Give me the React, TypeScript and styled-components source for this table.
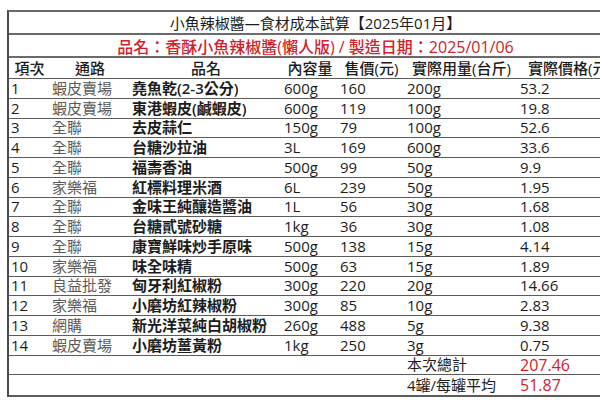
import styled, { createGlobalStyle } from "styled-components";

const GlobalStyle = createGlobalStyle`
  body {
    margin: 0;
    background: #ffffff;
    overflow: hidden;
  }
`;

const COLS = "41px 80px 152px 56px 67px 113px 104px";

const Page = styled.div`
  padding: 10px 0 0 7px;
  width: 620px;
  font-family: "Open Sans", "Noto Sans CJK TC", sans-serif;
  color: #1c1c1c;
`;

const Sheet = styled.div`
  width: 613px;
  border-left: 2px solid #4a4a4a;
  border-top: 2px solid #6a6a6a;
`;

const TitleRow = styled.div<{ $red?: boolean }>`
  height: 21px;
  display: flex;
  align-items: center;
  justify-content: center;
  border-bottom: 2px solid #6a6a6a;
  font-size: ${(p) => (p.$red ? 16 : 15)}px;
  font-weight: ${(p) => (p.$red ? 500 : 400)};
  color: ${(p) => (p.$red ? "#d4202a" : "#1c1c1c")};
  white-space: nowrap;
`;

const Row = styled.div<{ $h?: number; $last?: boolean }>`
  display: grid;
  grid-template-columns: ${COLS};
  height: ${(p) => p.$h ?? 18.75}px;
  border-bottom: ${(p) => (p.$last ? "2px" : "1px")} solid #5c5c5c;
  align-items: center;
  font-size: 15px;
  line-height: 1;
  white-space: nowrap;
`;

const Head = styled.div`
  text-align: center;
  font-weight: 500;
  color: #1a1a1a;
`;

const Cell = styled.div<{ $tone?: "shop" | "name" | "red" }>`
  padding-left: 2px;
  color: ${(p) =>
    p.$tone === "shop" ? "#5a5a5a" : p.$tone === "red" ? "#d4202a" : "#1c1c1c"};
  font-weight: ${(p) => (p.$tone === "name" ? 600 : p.$tone === "red" ? 500 : 400)};
  font-size: ${(p) => (p.$tone === "red" ? 16 : 15)}px;
`;

const items = [
  ["1", "蝦皮賣場", "堯魚乾(2-3公分)", "600g", "160", "200g", "53.2"],
  ["2", "蝦皮賣場", "東港蝦皮(鹹蝦皮)", "600g", "119", "100g", "19.8"],
  ["3", "全聯", "去皮蒜仁", "150g", "79", "100g", "52.6"],
  ["4", "全聯", "台糖沙拉油", "3L", "169", "600g", "33.6"],
  ["5", "全聯", "福壽香油", "500g", "99", "50g", "9.9"],
  ["6", "家樂福", "紅標料理米酒", "6L", "239", "50g", "1.95"],
  ["7", "全聯", "金味王純釀造醬油", "1L", "56", "30g", "1.68"],
  ["8", "全聯", "台糖貳號砂糖", "1kg", "36", "30g", "1.08"],
  ["9", "全聯", "康寶鮮味炒手原味", "500g", "138", "15g", "4.14"],
  ["10", "家樂福", "味全味精", "500g", "63", "15g", "1.89"],
  ["11", "良益批發", "匈牙利紅椒粉", "300g", "220", "20g", "14.66"],
  ["12", "家樂福", "小磨坊紅辣椒粉", "300g", "85", "10g", "2.83"],
  ["13", "網購", "新光洋菜純白胡椒粉", "260g", "488", "5g", "9.38"],
  ["14", "蝦皮賣場", "小磨坊薑黃粉", "1kg", "250", "3g", "0.75"],
];

const heads = ["項次", "通路", "品名", "內容量", "售價(元)", "實際用量(台斤)", "實際價格(元)"];

export default function App() {
  return (
    <Page>
      <GlobalStyle />
      <Sheet>
        <TitleRow>小魚辣椒醬—食材成本試算【2025年01月】</TitleRow>
        <TitleRow $red>品名：香酥小魚辣椒醬(懶人版) / 製造日期：2025/01/06</TitleRow>
        <Row $h={20}>
          {heads.map((h) => (
            <Head key={h}>{h}</Head>
          ))}
        </Row>
        {items.map((r) => (
          <Row key={r[0]}>
            <Cell>{r[0]}</Cell>
            <Cell $tone="shop">{r[1]}</Cell>
            <Cell $tone="name">{r[2]}</Cell>
            <Cell>{r[3]}</Cell>
            <Cell>{r[4]}</Cell>
            <Cell>{r[5]}</Cell>
            <Cell>{r[6]}</Cell>
          </Row>
        ))}
        <Row>
          <Cell />
          <Cell />
          <Cell />
          <Cell />
          <Cell />
          <Cell>本次總計</Cell>
          <Cell $tone="red">207.46</Cell>
        </Row>
        <Row $h={20} $last>
          <Cell />
          <Cell />
          <Cell />
          <Cell />
          <Cell />
          <Cell>4罐/每罐平均</Cell>
          <Cell $tone="red">51.87</Cell>
        </Row>
      </Sheet>
    </Page>
  );
}
